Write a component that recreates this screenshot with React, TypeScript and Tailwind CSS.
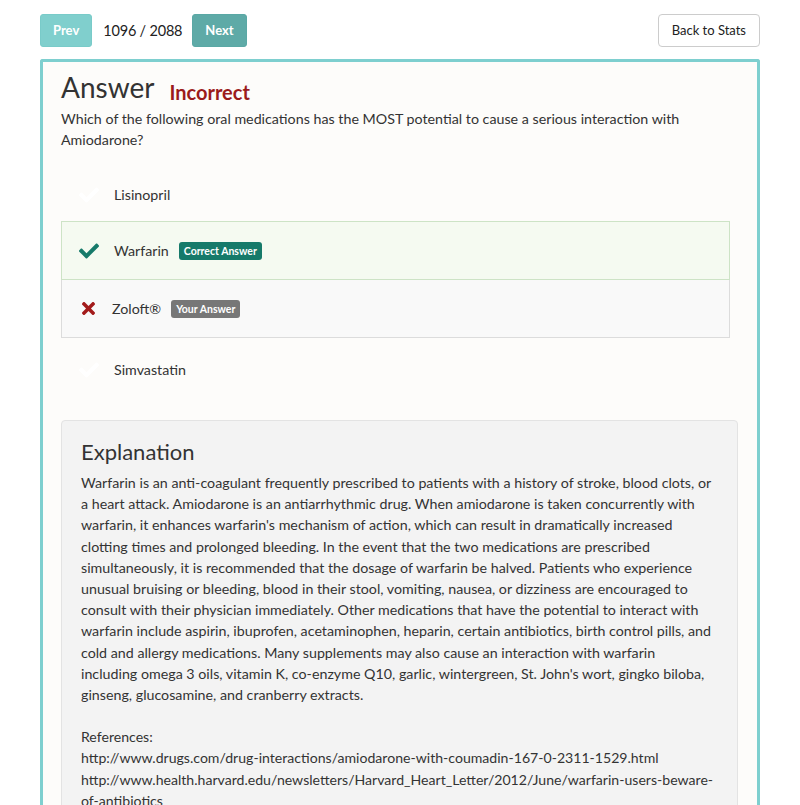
import { FaCheck, FaTimes } from 'react-icons/fa';

const OPTIONS = [
  { label: 'Lisinopril', state: 'none' },
  { label: 'Warfarin', state: 'correct' },
  { label: 'Zoloft®', state: 'wrong' },
  { label: 'Simvastatin', state: 'none' },
];

const EXPLANATION =
  "Warfarin is an anti-coagulant frequently prescribed to patients with a history of stroke, blood clots, or a heart attack. Amiodarone is an antiarrhythmic drug. When amiodarone is taken concurrently with warfarin, it enhances warfarin's mechanism of action, which can result in dramatically increased clotting times and prolonged bleeding. In the event that the two medications are prescribed simultaneously, it is recommended that the dosage of warfarin be halved. Patients who experience unusual bruising or bleeding, blood in their stool, vomiting, nausea, or dizziness are encouraged to consult with their physician immediately. Other medications that have the potential to interact with warfarin include aspirin, ibuprofen, acetaminophen, heparin, certain antibiotics, birth control pills, and cold and allergy medications. Many supplements may also cause an interaction with warfarin including omega 3 oils, vitamin K, co-enzyme Q10, garlic, wintergreen, St. John's wort, gingko biloba, ginseng, glucosamine, and cranberry extracts.";

function OptionRow({ label, state }: { label: string; state: string }) {
  if (state === 'correct') {
    return (
      <div className="flex h-[59px] items-center border border-[#cde3c6] bg-[#f5faf1] pl-[17px]">
        <FaCheck className="h-[20px] w-[20px] text-[#167a6a]" />
        <span className="ml-[15px]">{label}</span>
        <span className="ml-[10px] rounded-[3px] bg-[#167a6a] px-[5px] py-[2px] text-[10.5px] font-bold leading-[14px] text-white">
          Correct Answer
        </span>
      </div>
    );
  }
  if (state === 'wrong') {
    return (
      <div className="flex h-[58px] items-center border border-t-0 border-[#dcdcdc] bg-[#f9f9f9] pl-[17px]">
        <FaTimes className="h-[19px] w-[19px] text-[#a31b1b]" />
        <span className="ml-[14px]">{label}</span>
        <span className="ml-[10px] rounded-[3px] bg-[#777777] px-[5px] py-[2px] text-[10.5px] font-bold leading-[14px] text-white">
          Your Answer
        </span>
      </div>
    );
  }
  return (
    <div className="flex h-[58px] items-center border border-transparent pl-[17px] pt-[5px]">
      <FaCheck className="h-[20px] w-[20px] text-white" />
      <span className="ml-[15px]">{label}</span>
    </div>
  );
}

export default function App() {
  return (
    <div className="min-h-[805px] bg-white px-[40px] pt-[14px] font-['Lato',sans-serif] text-[14.25px] text-[#333]">
      {/* Top nav */}
      <div className="flex items-center">
        <button className="h-[33px] rounded-[3px] border border-[#79cbc9] bg-[#80cfcd] px-[12px] text-[13px] font-bold text-white">
          Prev
        </button>
        <span className="ml-[11px] text-[14.5px] tracking-[-0.2px] text-[#222]">1096 / 2088</span>
        <button className="ml-[10px] h-[33px] rounded-[3px] border border-[#5aa8a5] bg-[#5eaaa7] px-[12px] text-[13px] font-bold text-white">
          Next
        </button>
        <button className="ml-auto h-[33px] rounded-[4px] border border-[#cccccc] bg-white px-[13px] text-[13px] text-[#222]">
          Back to Stats
        </button>
      </div>

      {/* Answer panel */}
      <div className="mt-[12px] rounded-t-[3px] border-[3px] border-b-0 border-[#7ecfcf] bg-[#fdfcfa] pb-[40px] pl-[18px] pr-[19px] pt-[4px]">
        <div className="flex items-end">
          <h1 className="text-[28px] leading-[42px] text-[#333]">Answer</h1>
          <span className="mb-[1px] ml-[15px] text-[20px] font-bold leading-[30px] text-[#9b1b1b]">Incorrect</span>
        </div>
        <p className="leading-[21px]">
          Which of the following oral medications has the MOST potential to cause a serious interaction with Amiodarone?
        </p>

        <div className="mr-[8px] mt-[13px]">
          {OPTIONS.map((o) => (
            <OptionRow key={o.label} label={o.label} state={o.state} />
          ))}
        </div>

        <div className="mt-[24px] rounded-[4px] border border-[#e3e3e3] bg-[#f3f3f3] px-[19px] pb-[20px] pt-[16px]">
          <h2 className="text-[22px] leading-[30px] text-[#333]">Explanation</h2>
          <p className="mr-[5.5px] mt-[5px] leading-[21.2px]">{EXPLANATION}</p>
          <p className="mt-[21px] text-[14.1px] leading-[21.2px]">
            References:
            <br />
            http://www.drugs.com/drug-interactions/amiodarone-with-coumadin-167-0-2311-1529.html
            <br />
            http://www.health.harvard.edu/newsletters/Harvard_Heart_Letter/2012/June/warfarin-users-beware-of-antibiotics
          </p>
        </div>
      </div>
    </div>
  );
}
